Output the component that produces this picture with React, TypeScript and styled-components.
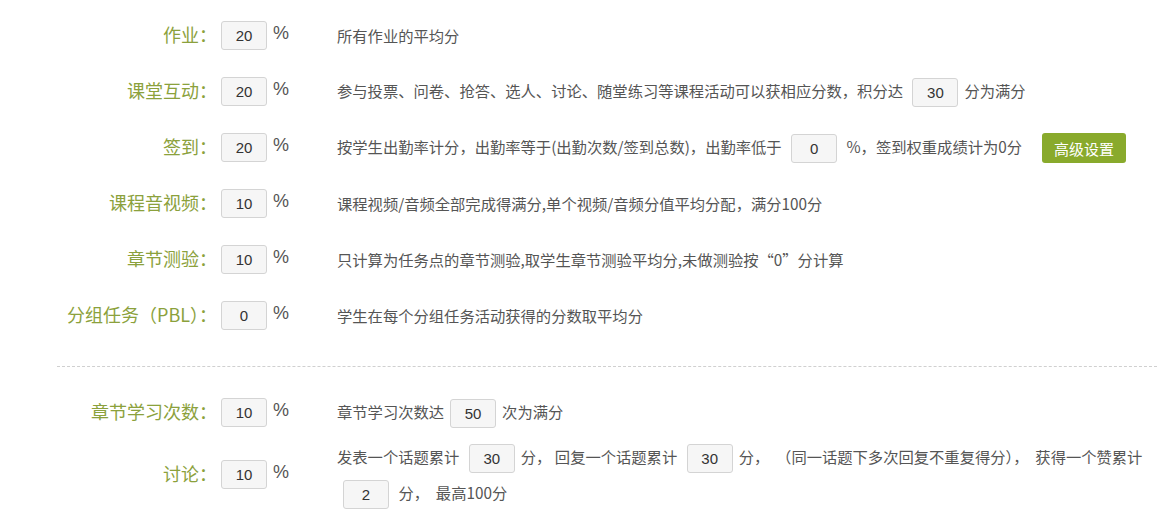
import React from "react";
import styled, { createGlobalStyle } from "styled-components";

const Global = createGlobalStyle`
  html, body { margin: 0; padding: 0; background: #fff; }
  body { font-family: "Microsoft YaHei", "Noto Sans CJK SC", sans-serif; }
`;

const Page = styled.div`
  width: 1166px;
  padding-top: 21px;
  box-sizing: border-box;
`;

const Row = styled.div<{ $mt?: number; $free?: boolean }>`
  display: flex;
  align-items: center;
  height: ${(p) => (p.$free ? "auto" : "29px")};
  margin-top: ${(p) => p.$mt ?? 27}px;
  &:first-child { margin-top: 0; }
`;

const Label = styled.div`
  width: 217px;
  flex: none;
  margin-bottom: 3px;
  text-align: right;
  font-size: 18px;
  line-height: 24px;
  color: #8ba13c;
  white-space: nowrap;
`;

const Box = styled.input`
  width: 46px;
  height: 29px;
  box-sizing: border-box;
  padding: 0;
  border: 1px solid #d4d4d4;
  border-radius: 3px;
  background: #f6f6f6;
  text-align: center;
  font-family: "Liberation Sans", Arial, sans-serif;
  font-size: 15px;
  color: #333;
  outline: none;
  vertical-align: middle;
`;

const ScoreBox = styled(Box)`
  margin-left: 4px;
  flex: none;
`;

const InlineBox = styled(Box)`
  margin: 0 6px;
`;

const Percent = styled.span`
  flex: none;
  width: 64px;
  margin-left: 6px;
  margin-bottom: 5px;
  font-family: "Liberation Sans", Arial, sans-serif;
  font-size: 18px;
  line-height: 20px;
  color: #555;
`;

const Desc = styled.div<{ $lh?: number }>`
  flex: 1;
  padding-right: 9px;
  font-size: 15.3px;
  line-height: ${(p) => p.$lh ?? 29}px;
  color: #555;
  white-space: ${(p) => (p.$lh ? "normal" : "nowrap")};
`;

const Button = styled.button`
  height: 30px;
  width: 84px;
  margin-left: 20px;
  padding: 0;
  border: none;
  border-radius: 3px;
  background: #89aa2c;
  color: #fff;
  font-family: "Microsoft YaHei", "Noto Sans CJK SC", sans-serif;
  font-size: 15px;
  vertical-align: middle;
  cursor: pointer;
`;

const Divider = styled.div`
  margin: 36px 9px 31px 57px;
  border-top: 1px dashed #d0d0d0;
`;

const Section = styled.div``;

type Item = { label: string; value: string; desc: React.ReactNode };

const items: Item[] = [
  { label: "作业：", value: "20", desc: "所有作业的平均分" },
  {
    label: "课堂互动：",
    value: "20",
    desc: (
      <>
        参与投票、问卷、抢答、选人、讨论、随堂练习等课程活动可以获相应分数，积分达{" "}
        <InlineBox readOnly value="30" />
        分为满分
      </>
    ),
  },
  {
    label: "签到：",
    value: "20",
    desc: (
      <>
        按学生出勤率计分，出勤率等于(出勤次数/签到总数)，出勤率低于{" "}
        <InlineBox readOnly value="0" /> %，签到权重成绩计为0分
        <Button type="button">高级设置</Button>
      </>
    ),
  },
  {
    label: "课程音视频：",
    value: "10",
    desc: "课程视频/音频全部完成得满分,单个视频/音频分值平均分配，满分100分",
  },
  {
    label: "章节测验：",
    value: "10",
    desc: "只计算为任务点的章节测验,取学生章节测验平均分,未做测验按“0”分计算",
  },
  {
    label: "分组任务（PBL）：",
    value: "0",
    desc: "学生在每个分组任务活动获得的分数取平均分",
  },
];

export default function App() {
  return (
    <Page>
      <Global />
      <Section>
        {items.map((it) => (
          <Row key={it.label}>
            <Label>{it.label}</Label>
            <ScoreBox readOnly value={it.value} />
            <Percent>%</Percent>
            <Desc>{it.desc}</Desc>
          </Row>
        ))}
      </Section>
      <Divider />
      <Section>
        <Row>
          <Label>章节学习次数：</Label>
          <ScoreBox readOnly value="10" />
          <Percent>%</Percent>
          <Desc>
            章节学习次数达
            <InlineBox readOnly value="50" />
            次为满分
          </Desc>
        </Row>
        <Row $mt={11} $free>
          <Label>讨论：</Label>
          <ScoreBox readOnly value="10" />
          <Percent>%</Percent>
          <Desc $lh={36}>
            发表一个话题累计 <InlineBox readOnly value="30" />
            分， 回复一个话题累计 <InlineBox readOnly value="30" />
            分，&nbsp; （同一话题下多次回复不重复得分），&nbsp; 获得一个赞累计
            <InlineBox readOnly value="2" /> 分，&nbsp; 最高100分
          </Desc>
        </Row>
      </Section>
    </Page>
  );
}
